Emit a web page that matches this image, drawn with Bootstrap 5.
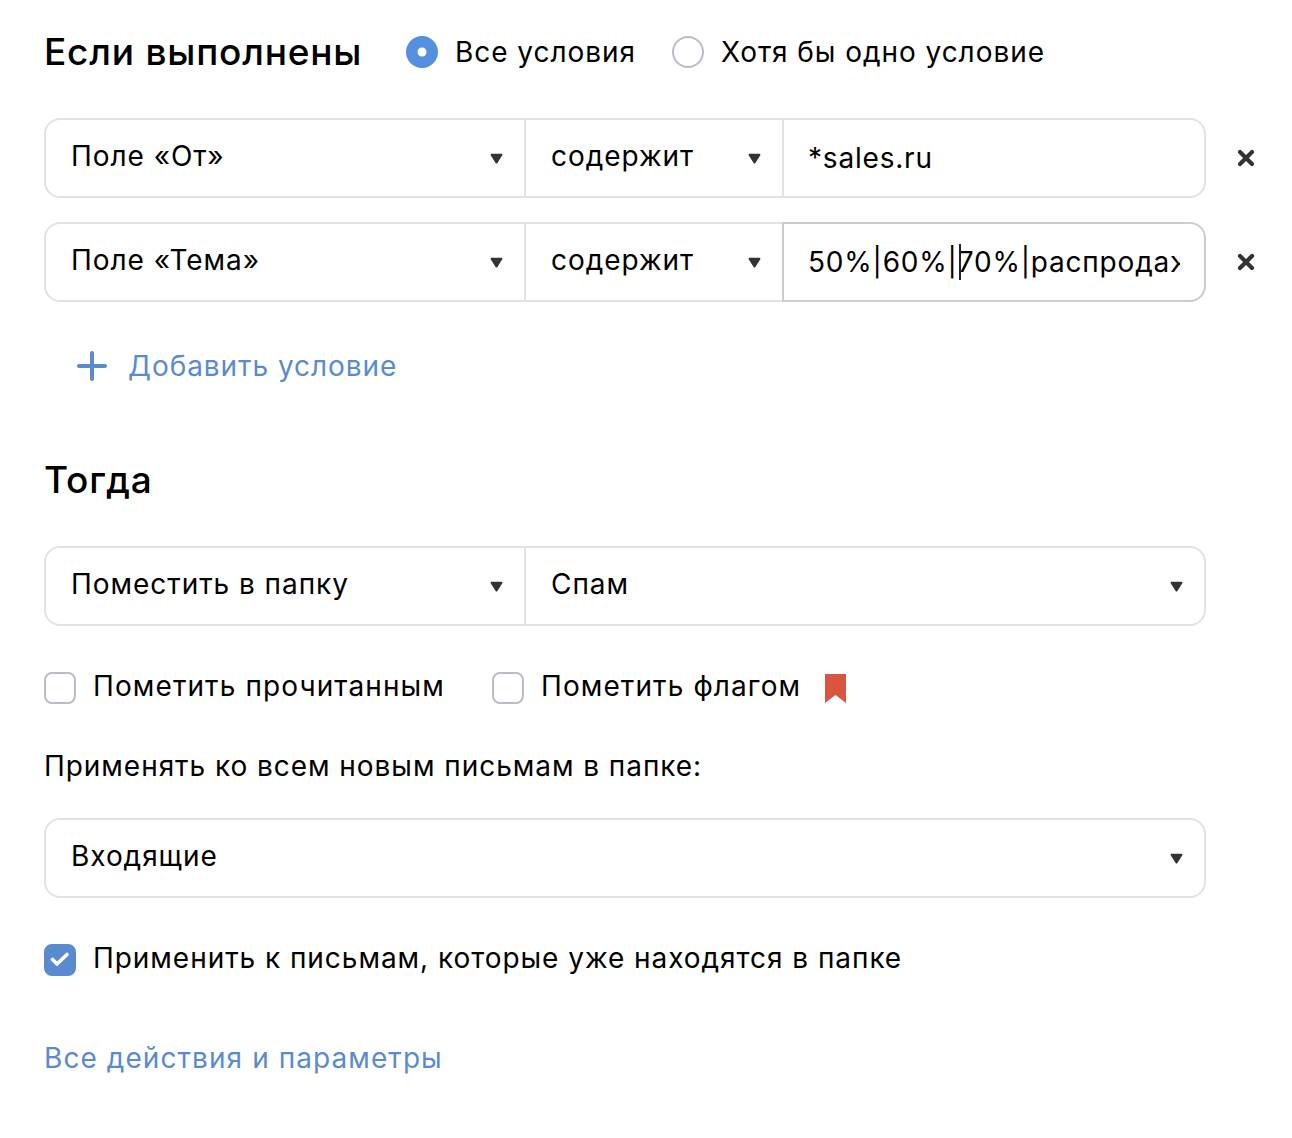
<!DOCTYPE html>
<html lang="ru">
<head>
<meta charset="utf-8">
<title>Фильтр</title>
<link href="https://cdn.jsdelivr.net/npm/bootstrap@5.3.0/dist/css/bootstrap.min.css" rel="stylesheet">
<style>
body{font-family:Inter,Roboto,"Liberation Sans",sans-serif;color:#000;background:#fff;font-size:28px;letter-spacing:.95px;line-height:40px}
.pg{padding:32px 0 0 44px;width:1292px}
.hd{font-size:37px;font-weight:450;letter-spacing:.8px;line-height:40px;margin:0;color:#000}
.head-row{height:40px;margin-bottom:46px}
.head-row .hd{width:362px}
.opt{margin:0 36px 0 0;padding:0;min-height:0;display:flex;align-items:center;gap:17px}
.opt .form-check-input{float:none;margin:0;width:32px;height:32px;flex:none;background-color:#fff;border:2px solid #b8bdc9;box-shadow:none}
.opt .form-check-input[type=checkbox]{border-radius:8px}
.opt .form-check-input:checked{background-color:#5a8bd0;border-color:#5a8bd0}
.opt .form-check-input[type=radio]:checked{background-color:#5590e0;border-color:#5590e0;background-size:32px;background-position:-2px -2px;background-image:url("data:image/svg+xml,%3csvg xmlns='http://www.w3.org/2000/svg' viewBox='0 0 32 32'%3e%3ccircle cx='16' cy='16' r='4.500' fill='%23fff'/%3e%3c/svg%3e")}
.opt .form-check-input[type=checkbox]:checked{background-size:32px;background-position:-2px -2px;background-image:url("data:image/svg+xml,%3csvg xmlns='http://www.w3.org/2000/svg' viewBox='0 0 32 32'%3e%3cpath d='M8.500 15.500l4.500 4.500 10-9.500' fill='none' stroke='%23fff' stroke-width='3.600' stroke-linecap='round' stroke-linejoin='round'/%3e%3c/svg%3e")}
.opt .form-check-label{line-height:40px;color:#000}
.fg{width:1162px;height:80px;flex-wrap:nowrap}
.fg .form-select,.fg .form-control{height:80px;font:inherit;letter-spacing:.95px;color:#000;border:2px solid #e2e2e2;box-shadow:none;background-color:#fff;padding:0 24px 0 25px}
.fg .form-control{letter-spacing:.8px;padding-left:24px}
.fg .form-select{padding-bottom:4px}
.fg>.form-select:first-child{border-radius:16px 0 0 16px!important}
.fg>.w-c{border-radius:0 16px 16px 0!important}
.fg>.form-select:only-child{border-radius:16px!important}
.fg .form-select{background-image:url("data:image/svg+xml,%3csvg xmlns='http://www.w3.org/2000/svg' viewBox='0 0 12 10'%3e%3cpath d='M1.500 1.500h9L6 8.500z' fill='%23333' stroke='%23333' stroke-width='2' stroke-linejoin='round'/%3e%3c/svg%3e");background-size:13px 11px;background-position:right 21px center;background-repeat:no-repeat}
.fg .form-select+.form-select,.fg .form-select+.form-control{margin-left:-2px!important}
.w-a{flex:0 0 482px!important;width:482px!important}
.w-b{flex:0 0 260px!important;width:260px!important}
.w-c{flex:1 1 0!important;width:auto!important;min-width:0}
.fg .foc{border-color:#ccc}
.cond{position:relative;margin-bottom:24px}
.del{flex:none;width:24px;height:24px;margin-left:28px;padding:0;border:0;background:none;display:flex;align-items:center;justify-content:center}
.caret-mark{position:absolute;left:916px;top:22px;width:2px;height:36px;background:#222;z-index:6}
.addl{height:40px;margin-top:44px;padding-left:33px;gap:21px;color:#5a8bd0;text-decoration:none}
.then{margin:69px 0 41px;line-height:50px}
.chk{height:32px;margin-top:46px}
.chk .opt{margin-right:47px}
.chk .form-check-label{padding-bottom:4px}
.wide-label .form-check-label{letter-spacing:1.1px}
.lnk{display:inline-block;height:40px;margin-top:62px;color:#5a8bd0;text-decoration:none;letter-spacing:1.07px}
.txt{height:40px;margin:42px 0 32px}
</style>
</head>
<body>
<main class="pg">
  <div class="d-flex align-items-center head-row">
    <h1 class="hd">Если выполнены</h1>
    <div class="form-check opt"><input class="form-check-input" type="radio" name="m" id="r1" checked><label class="form-check-label" for="r1">Все условия</label></div>
    <div class="form-check opt"><input class="form-check-input" type="radio" name="m" id="r2"><label class="form-check-label" for="r2">Хотя бы одно условие</label></div>
  </div>

  <div class="d-flex align-items-center cond">
    <div class="input-group fg">
      <select class="form-select w-a"><option>Поле «От»</option></select>
      <select class="form-select w-b"><option>содержит</option></select>
      <input class="form-control w-c" type="text" value="*sales.ru">
    </div>
    <button class="del" type="button" aria-label="Удалить"><svg width="18" height="18" viewBox="0 0 18 18"><path d="M3 3l12 12M15 3L3 15" stroke="#333" stroke-width="4.200" stroke-linecap="round" fill="none"/></svg></button>
  </div>
  <div class="d-flex align-items-center cond mb-0">
    <div class="input-group fg position-relative">
      <select class="form-select w-a"><option>Поле «Тема»</option></select>
      <select class="form-select w-b"><option>содержит</option></select>
      <input class="form-control w-c foc" type="text" value="50%|60%|70%|распродажа">
      <span class="caret-mark"></span>
    </div>
    <button class="del" type="button" aria-label="Удалить"><svg width="18" height="18" viewBox="0 0 18 18"><path d="M3 3l12 12M15 3L3 15" stroke="#333" stroke-width="4.200" stroke-linecap="round" fill="none"/></svg></button>
  </div>

  <a href="#" class="d-flex align-items-center addl"><svg width="30" height="30" viewBox="0 0 30 30"><path d="M15 2v26M2 15h26" stroke="#5a8bd0" stroke-width="4" stroke-linecap="round"/></svg><span>Добавить условие</span></a>

  <h2 class="hd then">Тогда</h2>

  <div class="input-group fg">
    <select class="form-select w-a"><option>Поместить в папку</option></select>
    <select class="form-select w-c"><option>Спам</option></select>
  </div>

  <div class="d-flex align-items-center chk wide-label">
    <div class="form-check opt"><input class="form-check-input" type="checkbox" id="c1"><label class="form-check-label" for="c1">Пометить прочитанным</label></div>
    <div class="form-check opt me-0"><input class="form-check-input" type="checkbox" id="c2"><label class="form-check-label" for="c2">Пометить флагом</label></div>
    <svg class="ms-4" width="21" height="29" viewBox="0 0 21 29"><path d="M0 0h21v29l-10.500-8L0 29z" fill="#d9553d"/></svg>
  </div>

  <div class="txt">Применять ко всем новым письмам в папке:</div>

  <div class="input-group fg">
    <select class="form-select w-c"><option>Входящие</option></select>
  </div>

  <div class="d-flex align-items-center chk">
    <div class="form-check opt"><input class="form-check-input" type="checkbox" id="c3" checked><label class="form-check-label" for="c3">Применить к письмам, которые уже находятся в папке</label></div>
  </div>

  <a href="#" class="lnk">Все действия и параметры</a>
</main>
<script src="https://cdn.jsdelivr.net/npm/bootstrap@5.3.0/dist/js/bootstrap.bundle.min.js"></script>
</body>
</html>
